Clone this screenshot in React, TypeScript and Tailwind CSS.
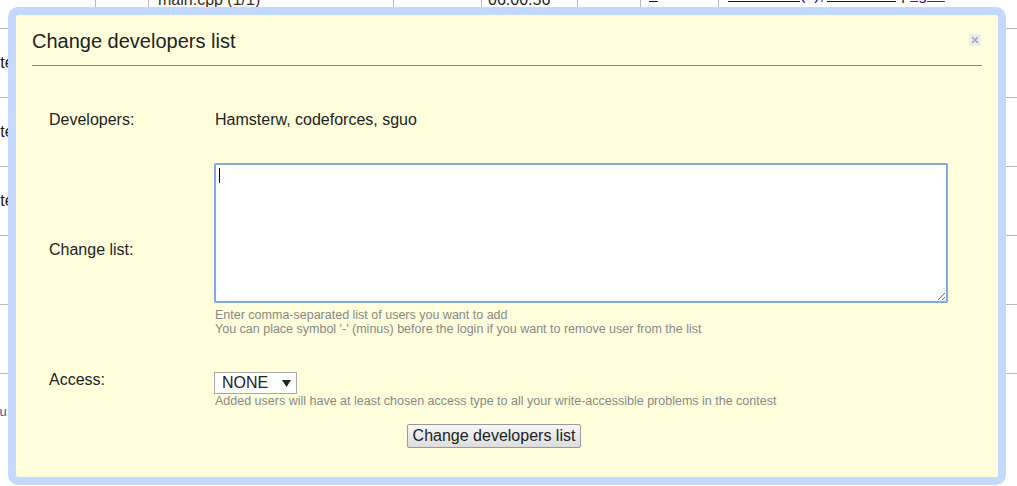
import React from "react";

const font = { fontFamily: '"Liberation Sans", Arial, sans-serif' };

const BackgroundTable = () => {
  const rows = [
    { left: "Contest", cls: "text-[#2a1a08]" },
    { left: "Contest", cls: "text-[#2a1a08]" },
    { left: "Contest", cls: "text-[#2a1a08]" },
    { left: "", cls: "" },
    { left: "", cls: "" },
  ];
  return (
    <div className="flex flex-col w-full text-[16px]">
      {/* top row, mostly scrolled away */}
      <div className="flex h-[29px] border-b border-[#b9b9b9]">
        <div className="w-[95px]" />
        <div className="w-[53px] border-l border-[#b9b9b9]" />
        <div className="w-[245px] border-l border-[#b9b9b9] pl-[9px]">
          <div className="-mt-[9px] leading-[18px] text-[#3a2a1a] whitespace-nowrap">main.cpp (1/1)</div>
        </div>
        <div className="w-[88px] border-l border-[#b9b9b9]" />
        <div className="w-[96px] border-l border-[#b9b9b9] pl-[6px]">
          <div className="-mt-[9px] leading-[18px] text-[#222] whitespace-nowrap">06:00:56</div>
        </div>
        <div className="w-[63px] border-l border-[#b9b9b9]" />
        <div className="w-[78px] border-l border-[#b9b9b9] pl-[8px]">
          <div className="-mt-[14px] leading-[18px] text-[#0000cc] underline decoration-[#0000cc] whitespace-nowrap">1</div>
        </div>
        <div className="flex-1 border-l border-[#b9b9b9] pl-[9px]">
          <div className="-mt-[14px] leading-[18px] whitespace-nowrap flex">
            <span className="text-[#0000cc] underline decoration-[#0000cc] w-[72px] overflow-hidden">Hamsterw</span>
            <span className="text-[#0000cc]">(2),</span>
            <span className="text-[#0000cc] underline decoration-[#0000cc] w-[69px] overflow-hidden ml-[3px]">codeforces</span>
            <span className="text-[#222] mx-[5px]">|</span>
            <span className="text-[#551a8b] underline decoration-[#551a8b] w-[60px] overflow-hidden">sguo</span>
          </div>
        </div>
      </div>
      {rows.map((r, i) => (
        <div key={i} className="flex h-[69px] border-b border-[#b9b9b9] items-center overflow-hidden">
          <div className={`-ml-[29px] whitespace-nowrap text-[16px] ${r.cls}`}>{r.left}</div>
        </div>
      ))}
      <div className="flex h-[74px] items-center overflow-hidden">
        <div className="-ml-[36px] whitespace-nowrap text-[13px] text-[#3b5998] pt-[2px]">users u</div>
      </div>
    </div>
  );
};

export default function App() {
  return (
    <div className="relative w-[1017px] h-[486px] overflow-hidden bg-white" style={font}>
      <BackgroundTable />

      {/* Modal */}
      <div className="absolute left-[8px] top-[7px] w-[998px] h-[478px] rounded-[10px] border-8 border-[#c3d9ff] bg-[#ffffdc] text-[#222]">
        {/* HEADER */}
        <div className="relative px-4 pt-[14px]">
          <h2 className="text-[20px] leading-[24px]">Change developers list</h2>
          <button className="absolute right-[17px] top-[19px] w-[12px] h-[12px] bg-[#eeeeee] flex items-center justify-center">
            <svg width="8" height="8" viewBox="0 0 8 8">
              <path d="M1 1 L7 7 M7 1 L1 7" stroke="#a8a8a8" strokeWidth="1.6" />
            </svg>
          </button>
          <div className="mt-[12px] border-t border-[#8a8a80]" />
        </div>

        {/* FORM */}
        <div className="ml-[33px] grid grid-cols-[165px_1fr] text-[16px]">
          {/* Developers */}
          <div className="mt-[44px] leading-[20px]">Developers:</div>
          <div className="mt-[44px] leading-[20px] pl-px">Hamsterw, codeforces, sguo</div>

          {/* Change list */}
          <div className="mt-[33px] flex items-center leading-[20px]">Change list:</div>
          <div className="mt-[33px]">
            <div className="relative w-[734px] h-[140px]">
              <textarea className="w-full h-full block bg-white border-2 border-[#7ea9e6] rounded-[2px] outline-none resize-both" />
              <span className="absolute left-[5px] top-[5px] w-px h-[15px] bg-black pointer-events-none" />
            </div>
            <div className="mt-[5px] pl-px text-[12.5px] leading-[14px] text-[#888]">
              <div>Enter comma-separated list of users you want to add</div>
              <div>You can place symbol '-' (minus) before the login if you want to remove user from the list</div>
            </div>
          </div>

          {/* Access */}
          <div className="mt-[34px] leading-[20px]">Access:</div>
          <div className="mt-[35px]">
            <div className="relative w-[83px] h-[22px]">
              <select className="appearance-none w-full h-full bg-white border border-[#a9a9a9] pl-[7px] text-[16px] leading-[20px] text-[#222] outline-none">
                <option>NONE</option>
                <option>READ</option>
                <option>WRITE</option>
                <option>OWNER</option>
              </select>
              <svg className="absolute left-[68px] top-[9px] pointer-events-none" width="9" height="7" viewBox="0 0 9 7">
                <path d="M0 0 H9 L4.5 7 Z" fill="#222" />
              </svg>
            </div>
            <div className="mt-px pl-px text-[12.5px] leading-[14px] text-[#888]">
              Added users will have at least chosen access type to all your write-accessible problems in the contest
            </div>
          </div>
        </div>

        {/* SUBMIT */}
        <div className="ml-[33px] w-[890px] flex justify-center mt-[16px]">
          <button className="h-[24px] px-[5px] text-[16px] leading-[20px] text-[#222] border border-[#9a9a9a] bg-gradient-to-b from-[#f7f7f7] to-[#dddddd] rounded-[2px]">
            Change developers list
          </button>
        </div>
      </div>
    </div>
  );
}
